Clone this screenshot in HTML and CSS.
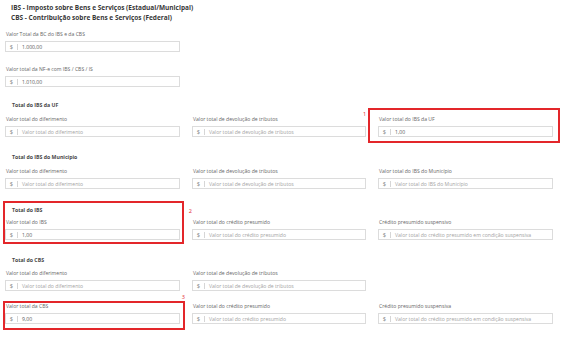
FILE: index.html
```html
<!DOCTYPE html>
<html lang="pt-BR">
<head>
<meta charset="utf-8">
<title>IBS / CBS</title>
<link rel="stylesheet" href="styles.css">
</head>
<body>
<div class="page">
  <div class="title">
    <div>IBS - Imposto sobre Bens e Serviços (Estadual/Municipal)</div>
    <div>CBS - Contribuição sobre Bens e Serviços (Federal)</div>
  </div>

  <div class="top-fields">
    <div class="field">
      <div class="label">Valor Total da BC do IBS e da CBS</div>
      <div class="input"><span class="prefix">$</span><span class="value">1.000,00</span></div>
    </div>
    <div class="field">
      <div class="label">Valor total da NF-e com IBS / CBS / IS</div>
      <div class="input"><span class="prefix">$</span><span class="value">1.010,00</span></div>
    </div>
  </div>

  <div class="section s-uf">
    <div class="heading">Total do IBS da UF</div>
    <div class="grid">
      <div class="field">
        <div class="label">Valor total do diferimento</div>
        <div class="input"><span class="prefix">$</span><span class="ph">Valor total do diferimento</span></div>
      </div>
      <div class="field">
        <div class="label">Valor total de devolução de tributos</div>
        <div class="input"><span class="prefix">$</span><span class="ph">Valor total de devolução de tributos</span></div>
      </div>
      <div class="field marked">
        <span class="frame frame-uf"></span>
        <span class="num num-1">1</span>
        <div class="label">Valor total do IBS da UF</div>
        <div class="input"><span class="prefix">$</span><span class="value">1,00</span></div>
      </div>
    </div>
  </div>

  <div class="section s-mun">
    <div class="heading">Total do IBS do Município</div>
    <div class="grid">
      <div class="field">
        <div class="label">Valor total do diferimento</div>
        <div class="input"><span class="prefix">$</span><span class="ph">Valor total do diferimento</span></div>
      </div>
      <div class="field">
        <div class="label">Valor total de devolução de tributos</div>
        <div class="input"><span class="prefix">$</span><span class="ph">Valor total de devolução de tributos</span></div>
      </div>
      <div class="field">
        <div class="label">Valor total do IBS do Município</div>
        <div class="input"><span class="prefix">$</span><span class="ph">Valor total do IBS do Município</span></div>
      </div>
    </div>
  </div>

  <div class="section s-ibs">
    <div class="grid grid-end">
      <div class="group marked">
        <span class="frame frame-ibs"></span>
        <span class="num num-2">2</span>
        <div class="heading">Total do IBS</div>
        <div class="field">
          <div class="label">Valor total do IBS</div>
          <div class="input"><span class="prefix">$</span><span class="value">1,00</span></div>
        </div>
      </div>
      <div class="field">
        <div class="label">Valor total do crédito presumido</div>
        <div class="input"><span class="prefix">$</span><span class="ph">Valor total do crédito presumido</span></div>
      </div>
      <div class="field">
        <div class="label">Crédito presumido suspensivo</div>
        <div class="input"><span class="prefix">$</span><span class="ph">Valor total do crédito presumido em condição suspensiva</span></div>
      </div>
    </div>
  </div>

  <div class="section s-cbs">
    <div class="heading">Total do CBS</div>
    <div class="grid rows">
      <div class="field">
        <div class="label">Valor total do diferimento</div>
        <div class="input"><span class="prefix">$</span><span class="ph">Valor total do diferimento</span></div>
      </div>
      <div class="field">
        <div class="label">Valor total de devolução de tributos</div>
        <div class="input"><span class="prefix">$</span><span class="ph">Valor total de devolução de tributos</span></div>
      </div>
      <div class="empty"></div>
      <div class="field marked">
        <span class="frame frame-cbs"></span>
        <span class="num num-3">3</span>
        <div class="label">Valor total da CBS</div>
        <div class="input"><span class="prefix">$</span><span class="value">9,00</span></div>
      </div>
      <div class="field">
        <div class="label">Valor total do crédito presumido</div>
        <div class="input"><span class="prefix">$</span><span class="ph">Valor total do crédito presumido</span></div>
      </div>
      <div class="field">
        <div class="label">Crédito presumido suspensiva</div>
        <div class="input"><span class="prefix">$</span><span class="ph">Valor total do crédito presumido em condição suspensiva</span></div>
      </div>
    </div>
  </div>
</div>
</body>
</html>
```

FILE: styles.css
```css
* { box-sizing: border-box; }

html, body {
  margin: 0;
  padding: 0;
  background: #ffffff;
}

body {
  font-family: "Open Sans", "Noto Sans", sans-serif;
  color: #555;
}

.page {
  width: 567px;
  height: 339px;
  overflow: hidden;
  padding: 3px 0 0 5px;
}

.title {
  padding-left: 6px;
  font-size: 6.5px;
  font-weight: 700;
  line-height: 10px;
  color: #383838;
}

.top-fields {
  margin-top: 7px;
  width: 175px;
  display: flex;
  flex-direction: column;
  gap: 13px;
}

.field {
  display: flex;
  flex-direction: column;
}

.label {
  height: 8px;
  line-height: 8px;
  font-size: 5.1px;
  color: #666;
  padding-left: 1px;
  margin-bottom: 3px;
  white-space: nowrap;
}

.input {
  height: 11px;
  border: 1px solid #dcdcdc;
  display: flex;
  align-items: center;
  font-size: 5.1px;
  background: #fff;
  white-space: nowrap;
  overflow: hidden;
}

.prefix {
  width: 12px;
  flex: none;
  text-align: center;
  font-size: 5.8px;
  line-height: 6px;
  color: #888;
  border-right: 1px solid #d6d6d6;
}

.value {
  padding-left: 4px;
  color: #555;
}

.ph {
  padding-left: 4px;
  color: #a3a3a3;
}

.heading {
  height: 8px;
  line-height: 8px;
  font-size: 5.2px;
  font-weight: 700;
  color: #474747;
  padding-left: 7px;
  margin-bottom: 6px;
}

.section { margin-top: 14px; }
.s-mun { margin-top: 16px; }
.s-ibs { margin-top: 17px; }
.s-cbs { margin-top: 16px; }
.s-cbs .heading { margin-bottom: 5px; }

.grid {
  display: grid;
  grid-template-columns: 175px 174px 175px;
  column-gap: 12px;
}

.grid-end { align-items: end; }
.group .heading { margin-bottom: 4px; }

.rows { row-gap: 11px; }

.marked { position: relative; }

.frame {
  position: absolute;
  border: 2px solid #e3262a;
  pointer-events: none;
}

.frame-uf { top: -7px; left: -10px; right: -7px; bottom: -6px; }
.frame-ibs { top: -5px; left: -2px; right: -4px; bottom: -4px; }
.frame-cbs { top: -1px; left: -2px; right: -5px; bottom: -6px; }

.num {
  position: absolute;
  font-size: 5.5px;
  line-height: 6px;
  color: #e3262a;
}

.num-1 { left: -15px; top: -4px; }
.num-2 { right: -12px; top: 2px; }
.num-3 { right: -5px; top: -8px; }
```
